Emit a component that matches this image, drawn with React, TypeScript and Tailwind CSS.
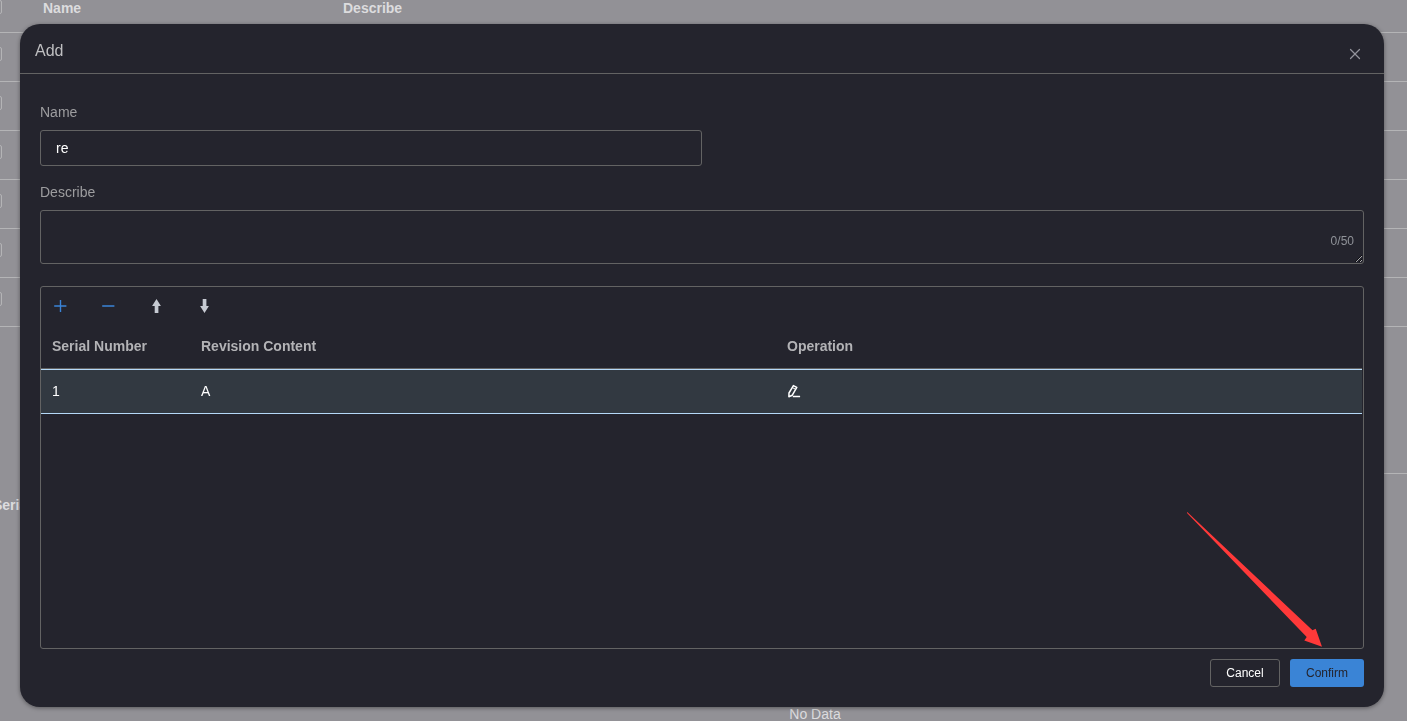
import { useState } from "react";
import { X } from "lucide-react";

type Revision = { id: number; content: string };

const MAX_DESCRIBE = 50;
const BACKGROUND_ROWS = [1, 2, 3, 4, 5, 6];

// List page that stays visible behind the dialog overlay.
function ListPage() {
  return (
    <div aria-hidden="true" inert className="h-screen overflow-hidden bg-[#929196] text-sm text-[#dcdcde]">
      <table className="w-full table-fixed border-collapse text-left leading-4">
        <colgroup>
          <col className="w-[31px]" />
          <col className="w-[300px]" />
          <col />
        </colgroup>
        <thead>
          <tr className="h-8 border-b border-[#b4b4b6]">
            <th className="p-0 pb-[18px] align-bottom">
              <input type="checkbox" aria-label="Select all" className="-ml-3 block size-3.5 appearance-none rounded-xs border border-[#b4b4b6]" />
            </th>
            <th className="px-3 pt-0 pb-4 align-bottom">Name</th>
            <th className="px-3 pt-0 pb-4 align-bottom">Describe</th>
          </tr>
        </thead>
        <tbody>
          {BACKGROUND_ROWS.map((row) => (
            <tr key={row} className="h-[49px] border-b border-[#b4b4b6]">
              <td className="p-0 pb-1.5">
                <input type="checkbox" aria-label={`Select row ${row}`} className="-ml-3 block size-3.5 appearance-none rounded-xs border border-[#b4b4b6]" />
              </td>
              <td />
              <td />
            </tr>
          ))}
        </tbody>
      </table>
      <div className="ml-10 h-[147px] border-b border-[#b4b4b6]" />
      <div className="-ml-[7px] pt-[21px] font-bold">Serial Number</div>
      <div className="flex justify-center pt-[189px] pl-[223px] leading-5">No Data</div>
    </div>
  );
}

function PlusIcon() {
  return (
    <svg viewBox="0 0 16 16" className="size-4" fill="none" stroke="#3a84d8">
      <path d="M2.2 8h12.2M8.5 2v12" strokeWidth="1.4" />
    </svg>
  );
}

function MinusIcon() {
  return (
    <svg viewBox="0 0 16 16" className="size-4" fill="none" stroke="#3a84d8">
      <path d="M2.2 8h12.2" strokeWidth="1.6" />
    </svg>
  );
}

function ArrowUpIcon() {
  return (
    <svg viewBox="0 0 16 16" className="size-4" fill="#c6cad2">
      <path d="M8.5 1 12.9 8h-2.5v7H6.7V8H4.1z" />
    </svg>
  );
}

function ArrowDownIcon() {
  return (
    <svg viewBox="0 0 16 16" className="size-4" fill="#c6cad2">
      <path d="M8.5 15 12.9 8h-2.5V1H6.7v7H4.1z" />
    </svg>
  );
}

function EditIcon() {
  return (
    <svg viewBox="0 0 14 14" className="size-3.5" fill="none" stroke="#ffffff" strokeWidth="1.5" strokeLinejoin="round">
      <path d="M6.4 1.6 9.8 3.3 5.3 11.2 1.9 12.8 2 9z" />
      <path d="M5.3 3.6 8.7 5.3" strokeWidth="1" />
      <path d="M5.8 12.5h7.3" strokeWidth="1.3" />
    </svg>
  );
}

// Red pointer that leads to the confirm button.
function Pointer() {
  return (
    <svg viewBox="0 0 136 136" className="pointer-events-none absolute right-[84px] bottom-[73px] size-[136px]" fill="#ff3939">
      <path d="M0 .3.5.2 125.5 118.3 128.7 116.8 135 134.8 117.3 128.6 119.7 124.9 0 1z" />
    </svg>
  );
}

export default function App() {
  const [name, setName] = useState("re");
  const [describe, setDescribe] = useState("");
  const [revisions, setRevisions] = useState<Revision[]>([{ id: 1, content: "A" }]);
  const [selected, setSelected] = useState(0);

  const addRevision = () => {
    setRevisions((rows) => [...rows, { id: Date.now(), content: "" }]);
    setSelected(revisions.length);
  };

  const removeRevision = () => {
    setRevisions((rows) => rows.filter((_, i) => i !== selected));
    setSelected(Math.max(0, selected - 1));
  };

  const move = (step: number) => {
    const target = selected + step;
    if (target < 0 || target >= revisions.length) return;
    const next = [...revisions];
    [next[selected], next[target]] = [next[target], next[selected]];
    setRevisions(next);
    setSelected(target);
  };

  return (
    <div className="relative font-['Liberation_Sans',Arial,sans-serif]">
      <ListPage />

      <div className="fixed inset-0 flex pt-6 pr-[23px] pb-3.5 pl-5">
        <div
          role="dialog"
          aria-modal="true"
          aria-labelledby="dialog-title"
          className="flex min-w-0 flex-1 flex-col rounded-[20px] bg-[#24242d] shadow-[0_1px_4px_rgba(0,0,0,0.4)]"
        >
          <header className="flex h-[50px] items-center justify-between border-b border-[#636363] pr-5 pl-[15px]">
            <h1 id="dialog-title" className="pt-1 text-base text-[#bfbfc1]">Add</h1>
            <button type="button" aria-label="Close" className="pt-2.5 text-[#93939b]">
              <X className="size-4.5" strokeWidth={1.6} />
            </button>
          </header>

          <form onSubmit={(e) => e.preventDefault()} className="flex min-h-0 flex-1 flex-col px-5 pt-7 pb-5">
            <label htmlFor="name" className="text-sm text-[#9d9d9f]">Name</label>
            <input
              id="name"
              value={name}
              onChange={(e) => setName(e.target.value)}
              className="mt-2 h-9 w-1/2 rounded-[3px] border border-[#636363] bg-transparent px-[15px] text-sm text-white outline-none"
            />

            <label htmlFor="describe" className="mt-4 text-sm text-[#9d9d9f]">Describe</label>
            <div className="relative mt-2 flex">
              <textarea
                id="describe"
                maxLength={MAX_DESCRIBE}
                value={describe}
                onChange={(e) => setDescribe(e.target.value)}
                className="h-[54px] w-full resize-y rounded-[3px] border border-[#636363] bg-transparent px-[15px] py-1.5 text-sm text-white outline-none"
              />
              <span className="pointer-events-none absolute right-2.5 bottom-[15px] text-xs text-[#909399]">
                {describe.length}/{MAX_DESCRIBE}
              </span>
            </div>

            <section className="mt-[22px] min-h-0 flex-1 overflow-auto rounded-[3px] border border-[#636363] pr-px">
              <div className="flex h-[38px] items-center gap-8 px-[11px]">
                <button type="button" aria-label="Add row" onClick={addRevision}><PlusIcon /></button>
                <button type="button" aria-label="Remove row" onClick={removeRevision}><MinusIcon /></button>
                <button type="button" aria-label="Move up" onClick={() => move(-1)}><ArrowUpIcon /></button>
                <button type="button" aria-label="Move down" onClick={() => move(1)}><ArrowDownIcon /></button>
              </div>
              <table className="w-full table-fixed border-separate border-spacing-0 text-left text-sm">
                <thead>
                  <tr className="h-11 text-[#b3b3b6] *:border-b *:border-[#636363] *:px-[11px] *:pt-0 *:pb-0.5">
                    <th className="w-[149px]">Serial Number</th>
                    <th>Revision Content</th>
                    <th>Operation</th>
                  </tr>
                </thead>
                <tbody>
                  {revisions.map((row, i) => (
                    <tr
                      key={row.id}
                      onClick={() => setSelected(i)}
                      className={
                        i === selected
                          ? "h-[45px] bg-[#323941] text-white *:border-y *:border-[#b5d9f8] *:px-[11px] *:pt-0 *:pb-0.5"
                          : "h-[45px] text-white *:border-y *:border-transparent *:px-[11px] *:pt-0 *:pb-0.5"
                      }
                    >
                      <td>{i + 1}</td>
                      <td>{row.content}</td>
                      <td>
                        <button type="button" aria-label="Edit row" className="block"><EditIcon /></button>
                      </td>
                    </tr>
                  ))}
                </tbody>
              </table>
            </section>

            <footer className="mt-2.5 flex justify-end gap-2.5 text-xs">
              <button type="button" className="h-7 min-w-[70px] rounded-[3px] border border-[#636363] px-[15px] text-white">Cancel</button>
              <button type="submit" className="h-7 rounded-[3px] bg-[#3a84d6] px-4 text-[#24242d]">Confirm</button>
            </footer>
          </form>
        </div>
        <Pointer />
      </div>
    </div>
  );
}
